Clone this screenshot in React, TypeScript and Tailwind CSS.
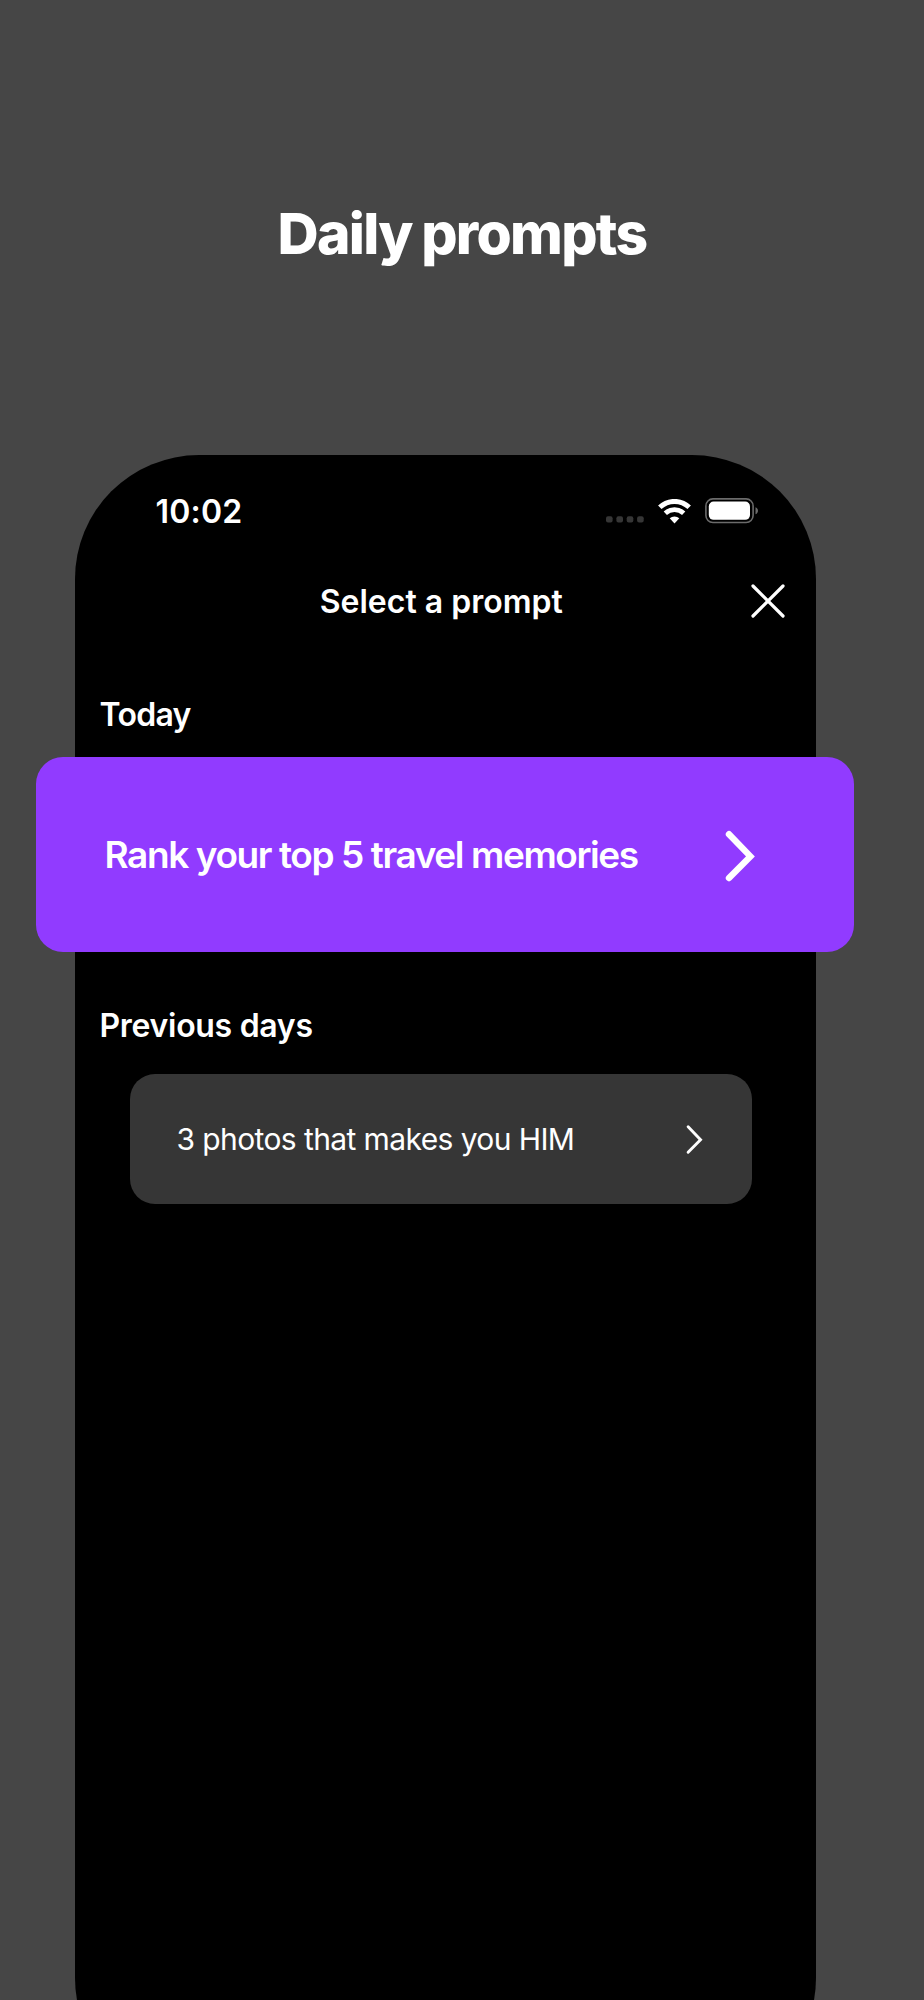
type ChevronProps = {
  className: string;
  strokeWidth: number;
};

function SignalDots() {
  return (
    <svg width="38" height="7" viewBox="0 0 38 7" fill="#363636">
      <rect x="0" y="0.2" width="6.6" height="6.4" rx="2" />
      <rect x="10.4" y="0.2" width="6.6" height="6.4" rx="2" />
      <rect x="20.7" y="0.2" width="6.6" height="6.4" rx="2" />
      <rect x="31.1" y="0.2" width="6.6" height="6.4" rx="2" />
    </svg>
  );
}

function WifiIcon() {
  return (
    <svg width="33" height="25" viewBox="0 0 33 25" fill="none">
      <path d="M1.8 8.3A21.3 21.3 0 0 1 31.2 8.3" stroke="white" strokeWidth="5" />
      <path d="M7.3 14.2A13.5 13.5 0 0 1 25.7 14.2" stroke="white" strokeWidth="4.8" />
      <path d="M16.5 24.4L11.7 19.3A7.4 7.4 0 0 1 21.3 19.3Z" fill="white" />
    </svg>
  );
}

function BatteryIcon() {
  return (
    <svg width="54" height="26" viewBox="0 0 54 26" fill="none">
      <rect x="0.9" y="0.9" width="47.2" height="23.6" rx="7" stroke="#6b6b6b" strokeWidth="1.6" />
      <rect x="3.8" y="3.6" width="41.2" height="18.2" rx="4.8" fill="white" />
      <path d="M50.5 9.2C52.2 9.9 53 11.1 53 12.7C53 14.3 52.2 15.5 50.5 16.2Z" fill="#6b6b6b" />
    </svg>
  );
}

function CloseIcon() {
  return (
    <svg width="34" height="34" viewBox="0 0 34 34" fill="none">
      <path d="M2 2L32 32M32 2L2 32" stroke="white" strokeWidth="3.2" strokeLinecap="round" />
    </svg>
  );
}

function Chevron({ className, strokeWidth }: ChevronProps) {
  return (
    <svg className={className} viewBox="0 0 28 50" fill="none">
      <path
        d="M3 3.2L24.4 25.4L3 47"
        stroke="white"
        strokeWidth={strokeWidth}
        strokeLinecap="round"
        strokeLinejoin="miter"
      />
    </svg>
  );
}

function StatusBar() {
  return (
    <div className="flex h-[113px] items-center justify-between pr-[57px] pl-[81px]">
      <span className="mt-px text-[32px] leading-10 font-semibold tracking-[0.2px]">10:02</span>
      <div className="flex items-center">
        <div className="mt-[17px] mr-[14px] flex">
          <SignalDots />
        </div>
        <div className="mr-[14px]">
          <WifiIcon />
        </div>
        <BatteryIcon />
      </div>
    </div>
  );
}

function App() {
  return (
    <div className="flex h-[2000px] w-[924px] flex-col overflow-hidden bg-[#464646] font-['Inter',sans-serif] text-white">
      <h1 className="mt-[194px] text-center text-[57px] leading-20 font-extrabold tracking-[-1.7px] [word-spacing:-1.5px]">
        Daily prompts
      </h1>

      {/* Phone, runs off the bottom edge */}
      <div className="mt-[180.5px] ml-[74.5px] flex h-[1647px] w-[741.5px] shrink-0 flex-col rounded-[124px] bg-black">
        <StatusBar />

        <header className="grid h-[67px] grid-cols-[1fr_auto_1fr] items-center pr-[31px] pl-[23px]">
          <span />
          <h2 className="mt-px text-[32px] leading-10 font-semibold">Select a prompt</h2>
          <button className="justify-self-end">
            <CloseIcon />
          </button>
        </header>

        <h3 className="mt-[60px] ml-[25px] text-[32px] leading-10 font-semibold tracking-[-0.7px]">
          Today
        </h3>

        {/* Highlighted card is wider than the phone */}
        <div className="mt-[22.5px] -mr-[38px] -ml-[38.5px] flex h-[195px] shrink-0 items-center justify-between rounded-[27px] bg-[#913bff] pr-[100px] pl-[68.5px]">
          <span className="text-[37px] leading-10 font-semibold tracking-[-1.4px]">
            Rank your top 5 travel memories
          </span>
          <Chevron className="mt-0.5 h-[50px] w-7 overflow-visible" strokeWidth={6.4} />
        </div>

        <h3 className="mt-[54px] ml-[25px] text-[32px] leading-10 font-semibold tracking-[-0.3px]">
          Previous days
        </h3>

        <div className="mt-[28px] mr-[64.5px] ml-[55.5px] flex h-[130px] shrink-0 items-center justify-between rounded-[25px] bg-[#363636] pr-[49px] pl-[46.5px]">
          <span className="text-[30px] leading-10 tracking-[-0.6px]">3 photos that makes you HIM</span>
          <Chevron className="h-[29px] w-[17px] overflow-visible" strokeWidth={5} />
        </div>
      </div>
    </div>
  );
}

export default App;
